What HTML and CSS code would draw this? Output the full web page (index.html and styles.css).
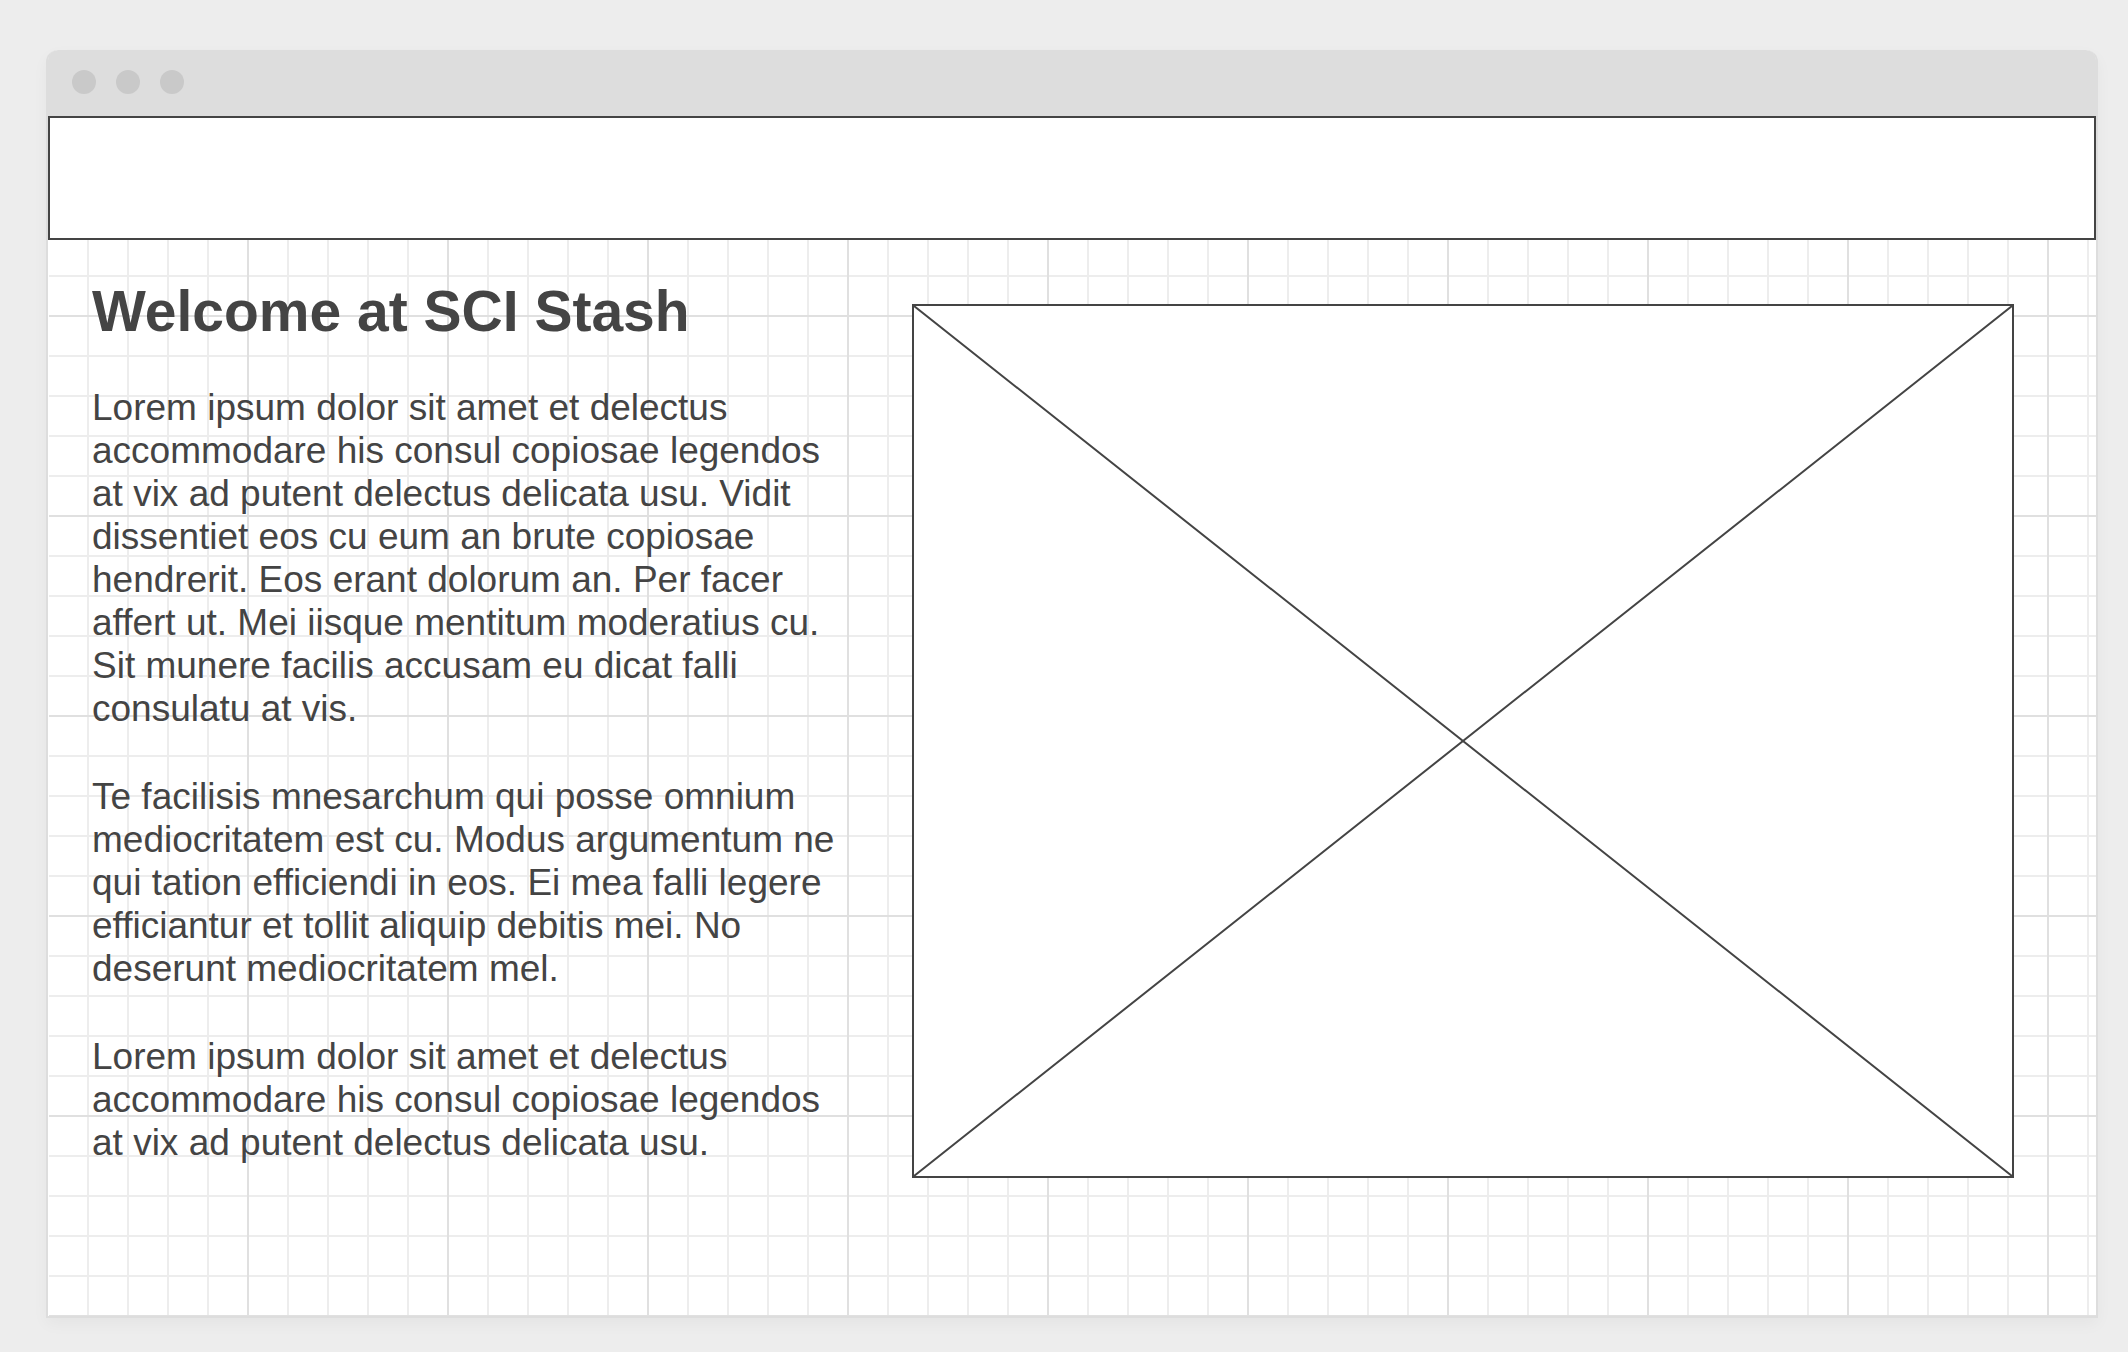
FILE: index.html
```html
<!DOCTYPE html>
<html lang="en">
<head>
<meta charset="utf-8">
<title>SCI Stash</title>
<link rel="stylesheet" href="styles.css">
</head>
<body>
<div class="window">
  <div class="titlebar">
    <span class="dot"></span>
    <span class="dot"></span>
    <span class="dot"></span>
  </div>
  <header class="banner"></header>
  <main class="content">
    <article class="intro">
      <h1>Welcome at SCI Stash</h1>
      <p>Lorem ipsum dolor sit amet et delectus accommodare his consul copiosae legendos at vix ad putent delectus delicata usu. Vidit dissentiet eos cu eum an brute copiosae hendrerit. Eos erant dolorum an. Per facer affert ut. Mei iisque mentitum moderatius cu. Sit munere facilis accusam eu dicat falli consulatu at vis.</p>
      <p>Te facilisis mnesarchum qui posse omnium mediocritatem est cu. Modus argumentum ne qui tation efficiendi in eos. Ei mea falli legere efficiantur et tollit aliquip debitis mei. No deserunt mediocritatem mel.</p>
      <p>Lorem ipsum dolor sit amet et delectus accommodare his consul copiosae legendos at vix ad putent delectus delicata usu.</p>
    </article>
    <svg class="placeholder" viewBox="0 0 100 100" preserveAspectRatio="none" aria-hidden="true">
      <path d="M0 0L100 100M100 0L0 100" vector-effect="non-scaling-stroke"/>
    </svg>
  </main>
</div>
</body>
</html>
```
FILE: styles.css
```css
* {
  box-sizing: border-box;
}

body {
  margin: 0;
  padding: 50px 30px 34px 46px;
  background: #ededed;
  color: #444;
  font-family: "Liberation Sans", Arial, sans-serif;
}

.window {
  border: 2px solid #ddd;
  border-top: 0;
  border-radius: 12px 12px 0 0;
  background: #fff;
  box-shadow: 0 6px 16px rgba(0, 0, 0, 0.04);
}

.titlebar {
  display: flex;
  gap: 20px;
  height: 66px;
  padding: 20px 24px;
  border-radius: 10px 10px 0 0;
  background: #ddd;
}

.dot {
  width: 24px;
  height: 24px;
  border-radius: 50%;
  background: #c9c9c9;
}

.banner {
  height: 124px;
  border: 2px solid #444;
  background: #fff;
}

/* Graph paper: a 40px grid with a darker line every 200px */
.content {
  display: grid;
  grid-template-columns: 748fr 1102fr;
  column-gap: 72px;
  align-items: start;
  margin-left: 1px;
  padding: 37px 82px 138px 43px;
  background-image:
    linear-gradient(90deg, #e0e0e0 2px, transparent 2px),
    linear-gradient(#e0e0e0 2px, transparent 2px),
    linear-gradient(90deg, #ededed 2px, transparent 2px),
    linear-gradient(#ededed 2px, transparent 2px);
  background-size: 200px 200px, 200px 200px, 40px 40px, 40px 40px;
  background-position: 198px 75px, 198px 75px, 38px 35px, 38px 35px;
}

h1 {
  margin: 0 0 41px;
  font-size: 57px;
  line-height: 68px;
}

p {
  margin: 0 0 45px;
  font-size: 37px;
  line-height: 43px;
}

p:last-child {
  margin-bottom: 0;
}

.placeholder {
  display: block;
  width: 100%;
  aspect-ratio: 1102 / 874;
  margin-top: 27px;
  border: 2px solid #444;
  background: #fff;
}

.placeholder path {
  fill: none;
  stroke: #444;
  stroke-width: 2px;
}
```
